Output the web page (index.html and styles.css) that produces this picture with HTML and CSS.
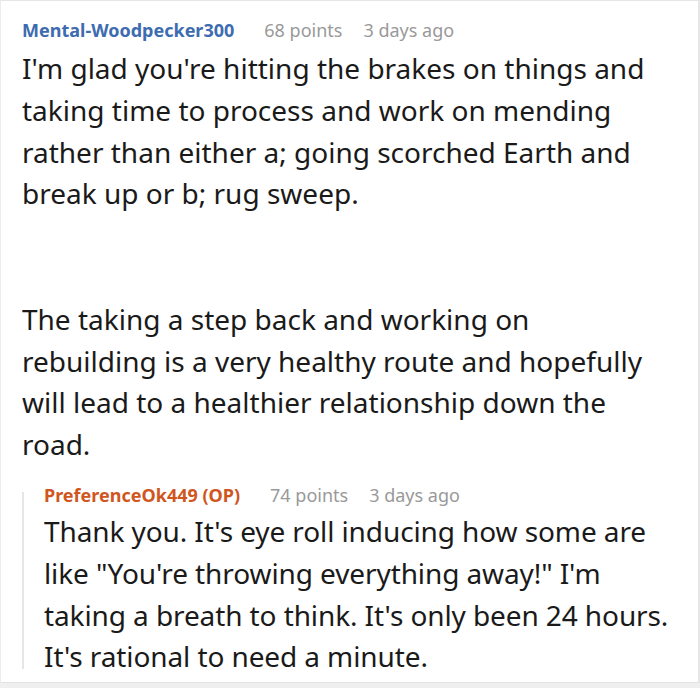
FILE: index.html
```html
<!DOCTYPE html>
<html>
<head>
<meta charset="utf-8">
<link rel="stylesheet" href="styles.css">
</head>
<body>
<div class="frame">
  <div class="comment">
    <div class="meta">
      <span class="author">Mental-Woodpecker300</span>
      <span class="info">68 points</span>
      <span class="info">3 days ago</span>
    </div>
    <div class="body main">
      <p>I'm glad you're hitting the brakes on things and taking time to process and work on mending rather than either a; going scorched Earth and break up or b; rug sweep.</p>
      <p class="blank">&nbsp;</p>
      <p>The taking a step back and working on rebuilding is a very healthy route and hopefully will lead to a healthier relationship down the road.</p>
    </div>
    <div class="reply">
      <div class="meta">
        <span class="author op">PreferenceOk449 (OP)</span>
        <span class="info">74 points</span>
        <span class="info">3 days ago</span>
      </div>
      <div class="body sub">
        <p>Thank you. It's eye roll inducing how some are like "You're throwing everything away!" I'm taking a breath to think. It's only been 24 hours. It's rational to need a minute.</p>
      </div>
    </div>
  </div>
</div>
</body>
</html>
```

FILE: styles.css
```css
html, body {
  margin: 0;
  padding: 0;
  background: #efefef;
}
body {
  width: 700px;
  height: 688px;
  overflow: hidden;
  font-family: "Noto Sans", "Open Sans", sans-serif;
}
.frame {
  box-sizing: border-box;
  width: 700px;
  height: 683px;
  background: #fff;
  border-top: 1px solid #e6e6e6;
  border-left: 1px solid #ececec;
  border-right: 2px solid #e6e6e6;
  border-bottom: 1px solid #e2e2e2;
  padding: 16px 18px 0 21px;
}
.meta {
  display: flex;
  align-items: baseline;
  font-size: 18px;
  line-height: 26px;
}
.author {
  font-weight: 700;
  color: #3d6cb0;
  margin-right: 30px;
}
.author.op {
  color: #d0561e;
}
.info {
  color: #999;
  margin-right: 21px;
}
.body {
  font-size: 28px;
  line-height: 41.8px;
  color: #1a1a1a;
}
.body.main {
  margin-top: 5px;
  max-width: 630px;
}
.body.sub {
  margin-top: 3px;
  letter-spacing: -0.1px;
}
.body p {
  margin: 0;
}
.body p.blank {
  height: 83.6px;
}
.reply {
  margin-top: 16px;
  padding-left: 22px;
  background-image: linear-gradient(#e6e6e6, #e6e6e6);
  background-repeat: no-repeat;
  background-position: 0 10px;
  background-size: 2px calc(100% - 19px);
}
```
